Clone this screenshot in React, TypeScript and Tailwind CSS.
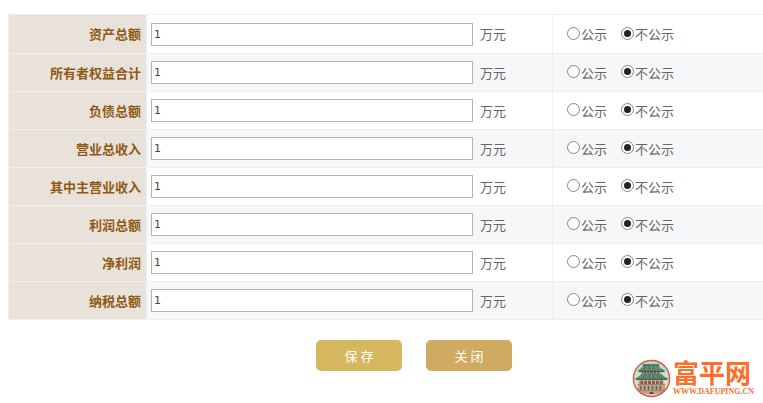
import React, { useId, useState } from "react";
import { cx } from "class-variance-authority";

const ITEMS = [
    "资产总额",
    "所有者权益合计",
    "负债总额",
    "营业总收入",
    "其中主营业收入",
    "利润总额",
    "净利润",
    "纳税总额",
];

interface RadioProps extends React.ComponentProps<"input"> {
    label: string;
}

function Radio({ label, ...props }: RadioProps) {
    return (
        <label className="flex items-center gap-px">
            <input
                type="radio"
                className="appearance-none grid place-items-center size-[13px] mb-0.5 rounded-full border border-[#858585] bg-white
                    checked:before:size-[7px] checked:before:rounded-full checked:before:bg-[#222222]"
                {...props}
            />
            {label}
        </label>
    );
}

function AssetRow({ label }: { label: string }) {
    const id = useId();
    const [amount, setAmount] = useState("1");
    const [isPublic, setIsPublic] = useState(false);

    return (
        <tr className="h-[38px] first:h-[39px] even:bg-[#f6f7f9]">
            <th scope="row" className="w-[138px] border border-[#efefef] bg-[#e9e2db] pr-[5px] text-right font-bold text-[#8f5a14]">
                <label htmlFor={id}>{label}</label>
            </th>
            <td className="w-[406px] border border-[#efefef] pl-1">
                <div className="flex items-center gap-[7px]">
                    <input
                        id={id}
                        type="text"
                        value={amount}
                        onChange={(e) => setAmount(e.target.value)}
                        className="h-[23px] w-[322px] border border-[#b4b4b4] bg-white px-0.5 font-['DejaVu_Sans','Noto_Sans_CJK_SC',sans-serif] text-[11px] text-[#444444]"
                    />
                    <span>万元</span>
                </div>
            </td>
            <td className="border border-r-0 border-[#efefef] pl-[14px]">
                <div className="flex items-center gap-[14px]">
                    <Radio label="公示" name={id} checked={isPublic} onChange={() => setIsPublic(true)} />
                    <Radio label="不公示" name={id} checked={!isPublic} onChange={() => setIsPublic(false)} />
                </div>
            </td>
        </tr>
    );
}

function Button({ className, ...props }: React.ComponentProps<"button">) {
    return (
        <button
            className={cx("h-[31px] w-[86px] rounded-[5px] text-[13px] text-white", className)}
            {...props}
        />
    );
}

function TowerEmblem() {
    return (
        <svg viewBox="0 0 40 40" className="size-[39px]" aria-hidden="true">
            <defs>
                <clipPath id="emblem">
                    <circle cx="20" cy="20" r="18" />
                </clipPath>
                <linearGradient id="sky" x1="0" y1="0" x2="0" y2="1">
                    <stop offset="0" stopColor="#a9dcd0" />
                    <stop offset="1" stopColor="#f0edc4" />
                </linearGradient>
            </defs>
            <g clipPath="url(#emblem)">
                <rect width="40" height="40" fill="url(#sky)" />
                <path d="M10 12h19v5H10z" fill="#8b5b4b" />
                <path d="M12 12v4M15 12v4M18 12v4M22 12v4M25 12v4M28 12v4" stroke="#d9b68c" />
                <path d="M12 6h15l2 3 5 3-1 1H7l-1-1 4-3z" fill="#55806a" />
                <path d="M12 6h15M11 5l2 2M28 5l-2 2" stroke="#3b5a4b" />
                <path d="M10 15h20l3 3 4 2-1 1H4l-1-1 4-2z" fill="#55806a" />
                <path d="M7 13h26M4 21h32" stroke="#33463a" strokeWidth=".8" />
                <path d="M12 8l-2 3M16 7l-1 4M20 7v4M24 7l1 4M27 8l2 3M11 16l-3 3M16 16l-1 3M20 16v3M24 16l1 3M29 16l3 3" stroke="#8fb19b" strokeWidth=".6" />
                <path d="M7 22h25v4H7z" fill="#8c5b48" />
                <path d="M8 22v4M12 22v4M16 22v4M20 22v4M24 22v4M28 22v4M32 22v4" stroke="#dfc29f" />
                <path d="M6 26h28v11H6z" fill="#bba58c" />
                <path d="M6 26h28M6 32h28" stroke="#776555" strokeWidth=".7" />
                <path d="M9 28v3M13 28v3M17 28v3M21 28v3M25 28v3M29 28v3" stroke="#674a3e" strokeWidth="1.4" />
                <path d="M18 37v-2q2-3 4 0v2z" fill="#554539" />
                <path d="M2 36h36v4H2z" fill="#d9d5ac" />
            </g>
            <circle cx="20" cy="20" r="18.5" fill="none" stroke="#e65343" strokeWidth="1.5" />
        </svg>
    );
}

function SiteMark() {
    return (
        <a href="#" className="absolute right-[9px] top-[358px] flex items-center gap-0.5 text-[#fb6f2c]">
            <TowerEmblem />
            <span className="flex flex-col">
                <span className="text-[26px] font-bold leading-7">富平网</span>
                <span className="font-['Liberation_Serif',serif] text-[8px] font-bold leading-3">WWW.DAFUPING.CN</span>
            </span>
        </a>
    );
}

export default function App() {
    return (
        <main className="relative bg-white pt-[14px] font-['Noto_Sans_CJK_SC',sans-serif] text-[13px] leading-5 text-[#666666]">
            <form onSubmit={(e) => e.preventDefault()}>
                <div className="pl-2">
                    <table className="w-full table-fixed border-collapse">
                        <tbody>
                            {ITEMS.map((item) => (
                                <AssetRow key={item} label={item} />
                            ))}
                        </tbody>
                    </table>
                </div>
                <div className="flex justify-center gap-6 pt-5 pr-16 pl-[129px] pb-8">
                    <Button type="submit" className="bg-[#d6b65f]">保 存</Button>
                    <Button type="button" className="bg-[#d1aa61]">关 闭</Button>
                </div>
            </form>
            <SiteMark />
        </main>
    );
}
